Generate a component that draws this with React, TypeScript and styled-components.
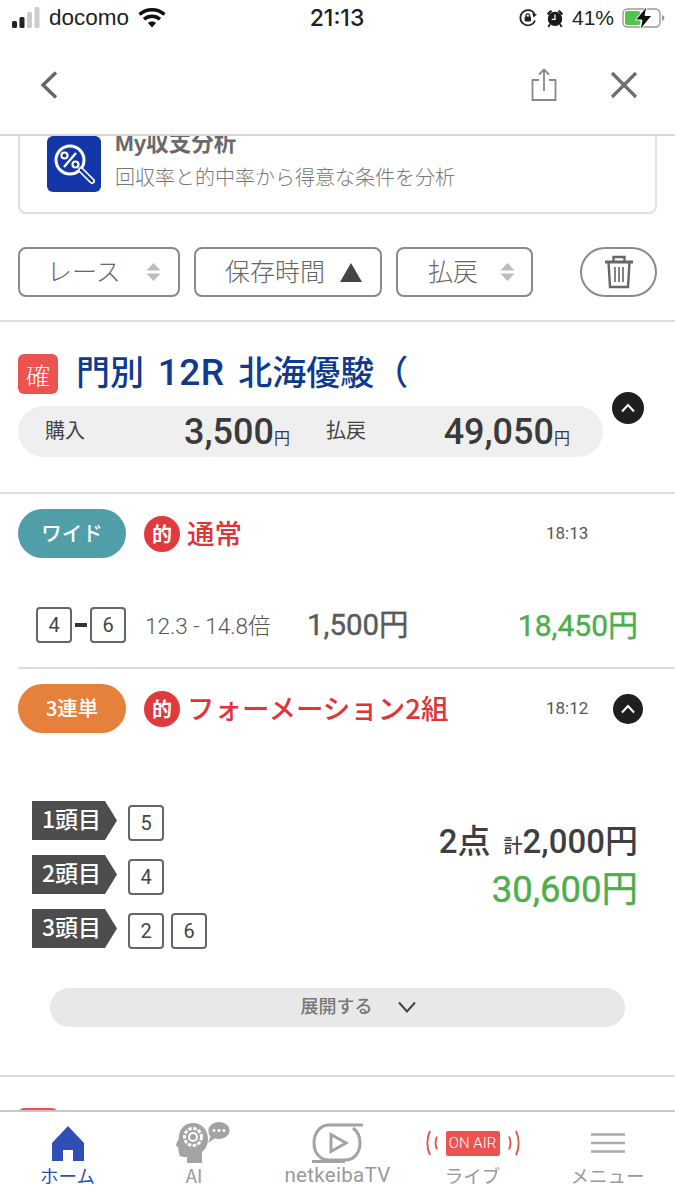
import React from "react";
import styled, { createGlobalStyle } from "styled-components";

const JP = `"Noto Sans CJK JP", "Noto Sans", sans-serif`;
const NUM = `Roboto, "Noto Sans CJK JP", sans-serif`;

const Global = createGlobalStyle`
  html, body { margin: 0; padding: 0; background: #fff; }
  * { box-sizing: border-box; }
`;

const Page = styled.div`
  width: 675px; height: 1200px; display: flex; flex-direction: column; overflow: hidden;
  background: #fff; font-family: ${JP}; color: #555;
`;

const StatusBar = styled.div`
  height: 36px; flex: none; display: grid; grid-template-columns: 1fr auto 1fr; align-items: center;
  padding: 0 9px 0 12px; color: #222; font-family: "Liberation Sans", sans-serif; font-size: 21px;
`;
const StatusLeft = styled.div`display: flex; align-items: center; gap: 7px;`;
const StatusRight = styled.div`display: flex; align-items: center; justify-content: flex-end; gap: 8px;`;
const Clock = styled.div`font-size: 23px; font-weight: 500; font-family: Inter, sans-serif; color: #222; margin-left: -4px;`;
const Carrier = styled.span`margin-right: 2px; font-size: 22.5px;`;

const NavBar = styled.div`
  height: 100px; flex: none; display: flex; align-items: center; padding: 0 36px; gap: 52px;
  border-bottom: 2px solid #d8d8d8;
`;
const NavSpacer = styled.div`flex: 1;`;

const Scroll = styled.div`flex: 1; min-height: 0; overflow: hidden;`;

const Card = styled.div`
  margin: -16px 18px 0; height: 94px; padding: 14px 27px 0; display: flex; gap: 14px;
  border: 2px solid #e0e0e0; border-radius: 8px;
`;
const CardIcon = styled.div`
  width: 54px; height: 56px; flex: none; background: #1336a8; border-radius: 6px; display: flex;
  align-items: center; justify-content: center;
`;
const CardText = styled.div`display: flex; flex-direction: column;`;
const CardTitle = styled.div`font-size: 22.5px; font-weight: 700; line-height: 22px; color: #6a6a6a; margin-top: -3px; font-family: "Liberation Sans", ${JP};`;
const CardSub = styled.div`font-size: 20px; line-height: 28px; margin-top: 8px; color: #777; font-weight: 300;`;

const FilterRow = styled.div`display: flex; align-items: stretch; gap: 14px; height: 50px; margin: 33px 18px 23px;`;
const FilterBtn = styled.div<{ $w: number; $pl: number; $gap: number }>`
  width: ${(p) => p.$w}px; padding-left: ${(p) => p.$pl}px; display: flex; align-items: center; gap: ${(p) => p.$gap}px;
  border: 2px solid #8a8a8a; border-radius: 8px; font-size: 25px; font-weight: 300; color: #666;
`;
const FilterLabel = styled.span`flex: none; line-height: 1; margin-top: -3px;`;
const TrashBtn = styled.div`
  width: 77px; margin-left: 33px; border: 2px solid #8a8a8a; border-radius: 25px; display: flex;
  align-items: center; justify-content: center;
`;
const Rule = styled.div<{ $left?: number; $color?: string }>`
  height: 2px; margin-left: ${(p) => p.$left ?? 0}px; background: ${(p) => p.$color ?? "#dddddd"};
`;

const RaceHead = styled.div`display: flex; align-items: center; gap: 18px; height: 40px; margin: 32px 18px 0;`;
const Kaku = styled.div`
  width: 40px; height: 40px; border-radius: 6px; background: #ec5350; color: #fff; display: flex;
  align-items: center; justify-content: center; font-size: 24px; font-weight: 300;
`;
const RaceTitle = styled.div`font-size: 34px; font-weight: 500; color: #0e3a8f; line-height: 36px; margin-top: -4px; white-space: pre; word-spacing: 6px;`;
const RaceLatin = styled.span`font-family: Roboto, sans-serif; font-size: 37px; letter-spacing: 0.5px;`;

const SummaryRow = styled.div`display: flex; align-items: flex-start; gap: 9px; margin: 12px 0 35px 18px;`;
const Summary = styled.div`
  width: 585px; height: 51px; border-radius: 26px; background: #efefef; display: grid;
  grid-template-columns: 245px 76px 204px; padding: 0 0 0 27px; align-items: center;
`;
const SumCell = styled.div`display: flex; align-items: center; justify-content: space-between;`;
const SumLabel = styled.div<{ $ml?: number }>`font-size: 20px; color: #444; font-weight: 400; line-height: 1; margin-left: ${(p) => p.$ml ?? 0}px; margin-top: -4px; white-space: nowrap;`;
const SumValue = styled.div`
  display: flex; align-items: baseline; justify-content: flex-end; font-family: ${NUM};
  font-size: 36px; font-weight: 500; color: #3a3a3a; line-height: 1;
`;
const SumUnit = styled.span`font-size: 16px; font-family: ${JP}; font-weight: 400;`;
const DarkDot = styled.div<{ $mt?: number; $size?: number }>`
  width: ${(p) => p.$size ?? 32}px; height: ${(p) => p.$size ?? 32}px; flex: none; border-radius: 50%;
  background: #1f1f1f; display: flex; align-items: center; justify-content: center;
  margin-top: ${(p) => p.$mt ?? 0}px;
`;

const BetHead = styled.div`display: flex; align-items: center; height: 49px; margin: 15px 18px 0;`;
const BetPill = styled.div<{ $bg: string }>`
  width: 108px; height: 49px; flex: none; border-radius: 25px; background: ${(p) => p.$bg}; color: #fff;
  display: flex; align-items: center; justify-content: center; font-size: 20.5px; font-weight: 500; padding-bottom: 3px;
`;
const HitMark = styled.div`
  width: 36px; height: 36px; flex: none; margin-left: 18px; border-radius: 50%; background: #e03a3e; color: #fff;
  display: flex; align-items: center; justify-content: center; font-size: 20px; font-weight: 700;
`;
const BetName = styled.div`margin: -2px 0 0 7px; font-size: 27.5px; font-weight: 500; color: #df3438; line-height: 1; white-space: nowrap;`;
const BetTime = styled.div`
  margin-left: auto; margin-top: -2px; width: 46px; font-family: ${NUM}; font-size: 17px; color: #555; white-space: nowrap;
`;
const BetTail = styled.div`width: 51px; margin-right: 14px; flex: none; display: flex; justify-content: flex-end;`;

const WideRow = styled.div`display: flex; align-items: center; height: 36px; margin: 49px 37px 24px 36px;`;
const NumBox = styled.div`
  width: 36px; height: 36px; flex: none; border: 2px solid #666; border-radius: 4px; background: #fff; display: flex;
  align-items: center; justify-content: center; font-family: ${NUM}; font-size: 20px; color: #444;
`;
const Dash = styled.div`width: 12px; height: 4px; margin: 0 3px 0 3px; background: #333; flex: none;`;
const Odds = styled.div`margin-left: 19px; width: 162px; font-family: ${NUM}; font-size: 22.5px; font-weight: 300; color: #555; white-space: nowrap; margin-top: -2px;`;
const Stake = styled.div`font-family: ${NUM}; font-size: 29.5px; font-weight: 400; -webkit-text-stroke: 0.4px #5a5a5a; color: #5a5a5a; line-height: 1; padding-top: 2px;`;
const Payout = styled.div`
  margin-left: auto; font-family: ${NUM}; font-size: 30px; font-weight: 400; -webkit-text-stroke: 0.4px #4eae4c; color: #4eae4c; line-height: 1; padding-top: 2px;
`;

const FormationBody = styled.div`display: flex; justify-content: space-between; margin: 68px 37px 0 32px;`;
const Legs = styled.div`display: flex; flex-direction: column; gap: 14px;`;
const Leg = styled.div`display: flex; align-items: flex-start; gap: 7px;`;
const LegTag = styled.div`
  width: 85px; height: 39px; margin-right: 4px; flex: none; background: #4d4d4d; color: #fff; display: flex; align-items: center;
  padding: 0 0 4px 10px; font-size: 23px; font-weight: 500; line-height: 1; white-space: nowrap;
  clip-path: polygon(0 0, 73px 0, 100% 50%, 73px 100%, 0 100%);
`;
const LegBox = styled(NumBox)`margin-top: 4px;`;
const Totals = styled.div`display: flex; flex-direction: column; align-items: flex-end; padding-top: 19px;`;
const TotalLine = styled.div`
  display: flex; align-items: baseline; font-family: ${NUM}; font-size: 33px; font-weight: 500; color: #3f3f3f; line-height: 44px;
`;
const TotalSmall = styled.span`font-family: ${JP}; font-size: 19px; margin: 0 0 0 13px; font-weight: 500;`;
const TotalPay = styled(Payout)`margin-top: 3px; font-size: 36.5px; line-height: 40px; padding-top: 0;`;

const Expand = styled.div`
  height: 39px; margin: 39px 50px 48px; border-radius: 20px; background: #e8e8e8; display: flex; align-items: center;
  justify-content: center; gap: 25px; font-size: 18px; color: #777; font-weight: 500; padding: 0 0 2px 41px;
`;
const ExpandLabel = styled.span`margin-top: -3px;`;
const NextRow = styled.div`height: 33px; padding: 31px 0 0 18px;`;
const NextBadge = styled.div`width: 40px; height: 40px; border-radius: 6px; background: #ec5350;`;

const TabBar = styled.div`
  height: 90px; flex: none; display: grid; grid-template-columns: repeat(5, 1fr); border-top: 2px solid #c9c9c9; background: #fff;
`;
const Tab = styled.div<{ $active?: boolean }>`
  display: flex; flex-direction: column; align-items: center; color: ${(p) => (p.$active ? "#2f4fb4" : "#9a9a9a")};
`;
const TabIcon = styled.div`height: 52px; display: flex; align-items: center; justify-content: center; padding-top: 10px;`;
const TabLabel = styled.div<{ $shift?: number; $latin?: boolean }>`
  font-size: ${(p) => (p.$latin ? 20.5 : 18.5)}px; line-height: 24px; margin-top: -1px; margin-right: ${(p) => p.$shift ?? 0}px;
  font-family: ${(p) => (p.$latin ? "Roboto, sans-serif" : JP)}; font-weight: 400; white-space: nowrap; letter-spacing: ${(p) => (p.$latin ? "0.3px" : "0")};
`;
const OnAir = styled.div`
  width: 54px; height: 25px; margin: 0 5px; background: #ec5350; color: #fff; border-radius: 2px; display: flex; align-items: center;
  justify-content: center; font-size: 15px; font-family: Roboto, sans-serif; font-weight: 300; white-space: nowrap;
`;

const Signal = () => (
  <svg width="30" height="24" viewBox="0 0 30 24">
    <rect x="0" y="15" width="5" height="7" rx="1.5" fill="#222" />
    <rect x="7.5" y="11" width="5" height="11" rx="1.5" fill="#222" />
    <rect x="15" y="6" width="5" height="16" rx="1.5" fill="#ccc" />
    <rect x="22.5" y="1" width="5" height="21" rx="1.5" fill="#ccc" />
  </svg>
);
const Wifi = () => (
  <svg width="28" height="22" viewBox="0 0 28 22" fill="none" stroke="#111" strokeWidth="3.4">
    <path d="M1.5 7.5c7-6.4 18-6.4 25 0" />
    <path d="M6 12.2c4.6-4 11.4-4 16 0" />
    <path d="M14 20.5l4-4.6c-2.3-1.9-5.7-1.9-8 0z" fill="#111" stroke="none" />
  </svg>
);
const Lock = () => (
  <svg width="20" height="20" viewBox="0 0 20 20" fill="none" stroke="#222" strokeWidth="1.7">
    <path d="M17 12.5A7.6 7.6 0 1 1 16.6 6" />
    <path d="M19 6.6l-3.6 2.8-1-4.2z" fill="#222" stroke="none" />
    <rect x="6.6" y="8.6" width="6.4" height="5" rx="1" fill="#222" stroke="none" />
    <path d="M8 9V7.6a1.8 1.8 0 0 1 3.6 0V9" strokeWidth="1.3" />
  </svg>
);
const Alarm = () => (
  <svg width="18" height="20" viewBox="0 0 20 22">
    <circle cx="10" cy="12" r="8" fill="#1a1a1a" />
    <path d="M1 6l4-4 2 1.6L2.6 8zM19 6l-4-4-2 1.6L17.4 8z" fill="#1a1a1a" />
    <path d="M10 7v5.4H6.4" fill="none" stroke="#fff" strokeWidth="1.4" />
    <path d="M4.5 18l-2 3M15.5 18l2 3" stroke="#1a1a1a" strokeWidth="2" />
  </svg>
);
const Battery = () => (
  <svg width="44" height="24" viewBox="0 0 44 24">
    <rect x="1" y="3" width="37" height="18" rx="4.5" fill="none" stroke="#9a9a9a" strokeWidth="1.4" />
    <rect x="3" y="5" width="15.5" height="14" rx="2.5" fill="#54c24f" />
    <path d="M40 9v6c1.6-.5 2.4-1.6 2.4-3S41.6 9.500 40 9z" fill="#9a9a9a" />
    <path d="M25 0L13.500 14h6.500l-2 10L30 9.500h-7z" fill="#111" stroke="#fff" strokeWidth="1" />
  </svg>
);
const Back = () => (
  <svg width="28" height="32" viewBox="0 0 28 32" fill="none" stroke="#666" strokeWidth="3.4">
    <path d="M20 3.500L7 16l13 12.500" />
  </svg>
);
const Share = () => (
  <svg width="26" height="34" viewBox="0 0 26 34" fill="none" stroke="#888" strokeWidth="1.800">
    <path d="M8 12H1.500v20h23V12H18" />
    <path d="M13 23V1.500M8 6.500L13 1.500 18 6.500" />
  </svg>
);
const Close = () => (
  <svg width="30" height="30" viewBox="0 0 30 30" fill="none" stroke="#6e6e6e" strokeWidth="3.2">
    <path d="M3 3l24 24M27 3L3 27" />
  </svg>
);
const Magnifier = () => (
  <svg width="42" height="42" viewBox="0 0 42 42" fill="none" stroke="#fff">
    <circle cx="17" cy="17" r="14" strokeWidth="3" />
    <path d="M28 27l11 11" strokeWidth="6" strokeLinecap="round" />
    <path d="M28 27l11 11" strokeWidth="2.500" stroke="#1336a8" strokeLinecap="round" />
    <path d="M11 24l12-14" strokeWidth="2.400" />
    <circle cx="11.500" cy="12.500" r="3" strokeWidth="2.200" />
    <circle cx="22.500" cy="21.500" r="3" strokeWidth="2.200" />
  </svg>
);
const Sort = () => (
  <svg width="15" height="18" viewBox="0 0 15 18" fill="#bcbcbc">
    <path d="M7.500 0l7 7.500H.5zM7.500 18l-7-7.500h14z" />
  </svg>
);
const SortUp = () => (
  <svg width="22" height="19" viewBox="0 0 22 19" fill="#444">
    <path d="M11 0l11 19H0z" />
  </svg>
);
const Trash = () => (
  <svg width="30" height="34" viewBox="0 0 30 34" fill="none" stroke="#666" strokeWidth="2.400">
    <path d="M1 7h28" strokeWidth="3" />
    <path d="M9.500 6V2h11v4" />
    <path d="M4.500 7l1.500 25h18l1.500-25" />
    <path d="M11 12v15M15 12v15M19 12v15" strokeWidth="1.600" />
  </svg>
);
const ChevUp = () => (
  <svg width="16" height="10" viewBox="0 0 16 10" fill="none" stroke="#fff" strokeWidth="2">
    <path d="M2 8.500l6-6.500 6 6.500" />
  </svg>
);
const ChevDown = () => (
  <svg width="18" height="12" viewBox="0 0 18 12" fill="none" stroke="#444" strokeWidth="2">
    <path d="M1 1.500L9 10.500l8-9" />
  </svg>
);
const Home = () => (
  <svg width="32" height="36" viewBox="0 0 32 36" fill="#2f4fb4">
    <path d="M16 1L32 18v18H21V25H11v11H0V18z" />
  </svg>
);
const AiHead = () => (
  <svg width="54" height="42" viewBox="0 0 54 42">
    <path d="M17 1c-8 0-14 6-14 14 0 3-3 6-3 8 0 1.500 2 2 2 2l1 7c.5 2 2 3 5 3h3v6h15v-11c4-3 6-8 6-13C32 8 26 1 17 1z" fill="#a3a3a3" />
    <circle cx="17" cy="15" r="8.500" fill="none" stroke="#fff" strokeWidth="3" strokeDasharray="3.500 1.500" />
    <circle cx="17" cy="15" r="4" fill="none" stroke="#fff" strokeWidth="2" />
    <path d="M43 0c6 0 10.500 3.600 10.500 8.500S49 17 43 17c-1.500 0-3-.2-4-.7L32 21l2.500-6.500C33 13 32.500 11 32.500 8.500 32.500 3.600 37 0 43 0z" fill="#a3a3a3" />
    <circle cx="38" cy="8.500" r="1.500" fill="#fff" />
    <circle cx="43" cy="8.500" r="1.500" fill="#fff" />
    <circle cx="48" cy="8.500" r="1.500" fill="#fff" />
  </svg>
);
const TvIcon = () => (
  <svg width="52" height="40" viewBox="0 0 52 40" fill="none" stroke="#a3a3a3" strokeWidth="3">
    <path d="M51 2H17C8 2 2 10 2 20s6 17 15 17h16c9 0 15-7 15-17 0-7-3-12-7-15" />
    <path d="M0 38.500h33" />
    <path d="M19 11.500l15 8.500-15 8.500z" />
  </svg>
);
const Wave = ({ flip }: { flip?: boolean }) => (
  <svg width="16" height="26" viewBox="0 0 16 26" fill="none" stroke="#e2504e" strokeWidth="1.800" style={flip ? { transform: "scaleX(-1)" } : undefined}>
    <path d="M5 1C1.500 8 1.500 18 5 25" />
    <path d="M12 6.500c-2 4.500-2 8.500 0 13" />
  </svg>
);
const Burger = () => (
  <svg width="34" height="20" viewBox="0 0 34 20" stroke="#ababab" strokeWidth="2.600">
    <path d="M0 1.500h34M0 10h34M0 18.500h34" />
  </svg>
);

const legs = [
  { tag: "1頭目", nums: ["5"] },
  { tag: "2頭目", nums: ["4"] },
  { tag: "3頭目", nums: ["2", "6"] },
];

export default function App() {
  return (
    <Page>
      <Global />
      <StatusBar>
        <StatusLeft>
          <Signal />
          <Carrier>docomo</Carrier>
          <Wifi />
        </StatusLeft>
        <Clock>21:13</Clock>
        <StatusRight>
          <Lock />
          <Alarm />
          <span>41%</span>
          <Battery />
        </StatusRight>
      </StatusBar>
      <NavBar>
        <Back />
        <NavSpacer />
        <Share />
        <Close />
      </NavBar>
      <Scroll>
        <Card>
          <CardIcon><Magnifier /></CardIcon>
          <CardText>
            <CardTitle>My収支分析</CardTitle>
            <CardSub>回収率と的中率から得意な条件を分析</CardSub>
          </CardText>
        </Card>
        <FilterRow>
          <FilterBtn $w={162} $pl={27} $gap={25}><FilterLabel>レース</FilterLabel><Sort /></FilterBtn>
          <FilterBtn $w={188} $pl={29} $gap={15}><FilterLabel>保存時間</FilterLabel><SortUp /></FilterBtn>
          <FilterBtn $w={137} $pl={30} $gap={22}><FilterLabel>払戻</FilterLabel><Sort /></FilterBtn>
          <TrashBtn><Trash /></TrashBtn>
        </FilterRow>
        <Rule />
        <RaceHead>
          <Kaku>確</Kaku>
          <RaceTitle>門別 <RaceLatin>12R</RaceLatin> 北海優駿（</RaceTitle>
        </RaceHead>
        <SummaryRow>
          <Summary>
            <SumCell>
              <SumLabel>購入</SumLabel>
              <SumValue>3,500<SumUnit>円</SumUnit></SumValue>
            </SumCell>
            <SumLabel $ml={36}>払戻</SumLabel>
            <SumValue>49,050<SumUnit>円</SumUnit></SumValue>
          </Summary>
          <DarkDot $mt={-14}><ChevUp /></DarkDot>
        </SummaryRow>
        <Rule />
        <BetHead>
          <BetPill $bg="#4f9ea8">ワイド</BetPill>
          <HitMark>的</HitMark>
          <BetName>通常</BetName>
          <BetTime>18:13</BetTime>
          <BetTail />
        </BetHead>
        <WideRow>
          <NumBox>4</NumBox>
          <Dash />
          <NumBox>6</NumBox>
          <Odds>12.3 - 14.8倍</Odds>
          <Stake>1,500円</Stake>
          <Payout>18,450円</Payout>
        </WideRow>
        <Rule $left={18} />
        <BetHead>
          <BetPill $bg="#e5813a">3連単</BetPill>
          <HitMark>的</HitMark>
          <BetName>フォーメーション2組</BetName>
          <BetTime>18:12</BetTime>
          <BetTail><DarkDot $size={30}><ChevUp /></DarkDot></BetTail>
        </BetHead>
        <FormationBody>
          <Legs>
            {legs.map((l) => (
              <Leg key={l.tag}>
                <LegTag>{l.tag}</LegTag>
                {l.nums.map((n) => <LegBox key={n}>{n}</LegBox>)}
              </Leg>
            ))}
          </Legs>
          <Totals>
            <TotalLine>2点<TotalSmall>計</TotalSmall>2,000円</TotalLine>
            <TotalPay>30,600円</TotalPay>
          </Totals>
        </FormationBody>
        <Expand><ExpandLabel>展開する</ExpandLabel><ChevDown /></Expand>
        <Rule />
        <NextRow><NextBadge /></NextRow>
      </Scroll>
      <TabBar>
        <Tab $active><TabIcon><Home /></TabIcon><TabLabel>ホーム</TabLabel></Tab>
        <Tab><TabIcon><AiHead /></TabIcon><TabLabel $shift={17}>AI</TabLabel></Tab>
        <Tab><TabIcon><TvIcon /></TabIcon><TabLabel $latin>netkeibaTV</TabLabel></Tab>
        <Tab><TabIcon><Wave /><OnAir>ON AIR</OnAir><Wave flip /></TabIcon><TabLabel>ライブ</TabLabel></Tab>
        <Tab><TabIcon><Burger /></TabIcon><TabLabel>メニュー</TabLabel></Tab>
      </TabBar>
    </Page>
  );
}
